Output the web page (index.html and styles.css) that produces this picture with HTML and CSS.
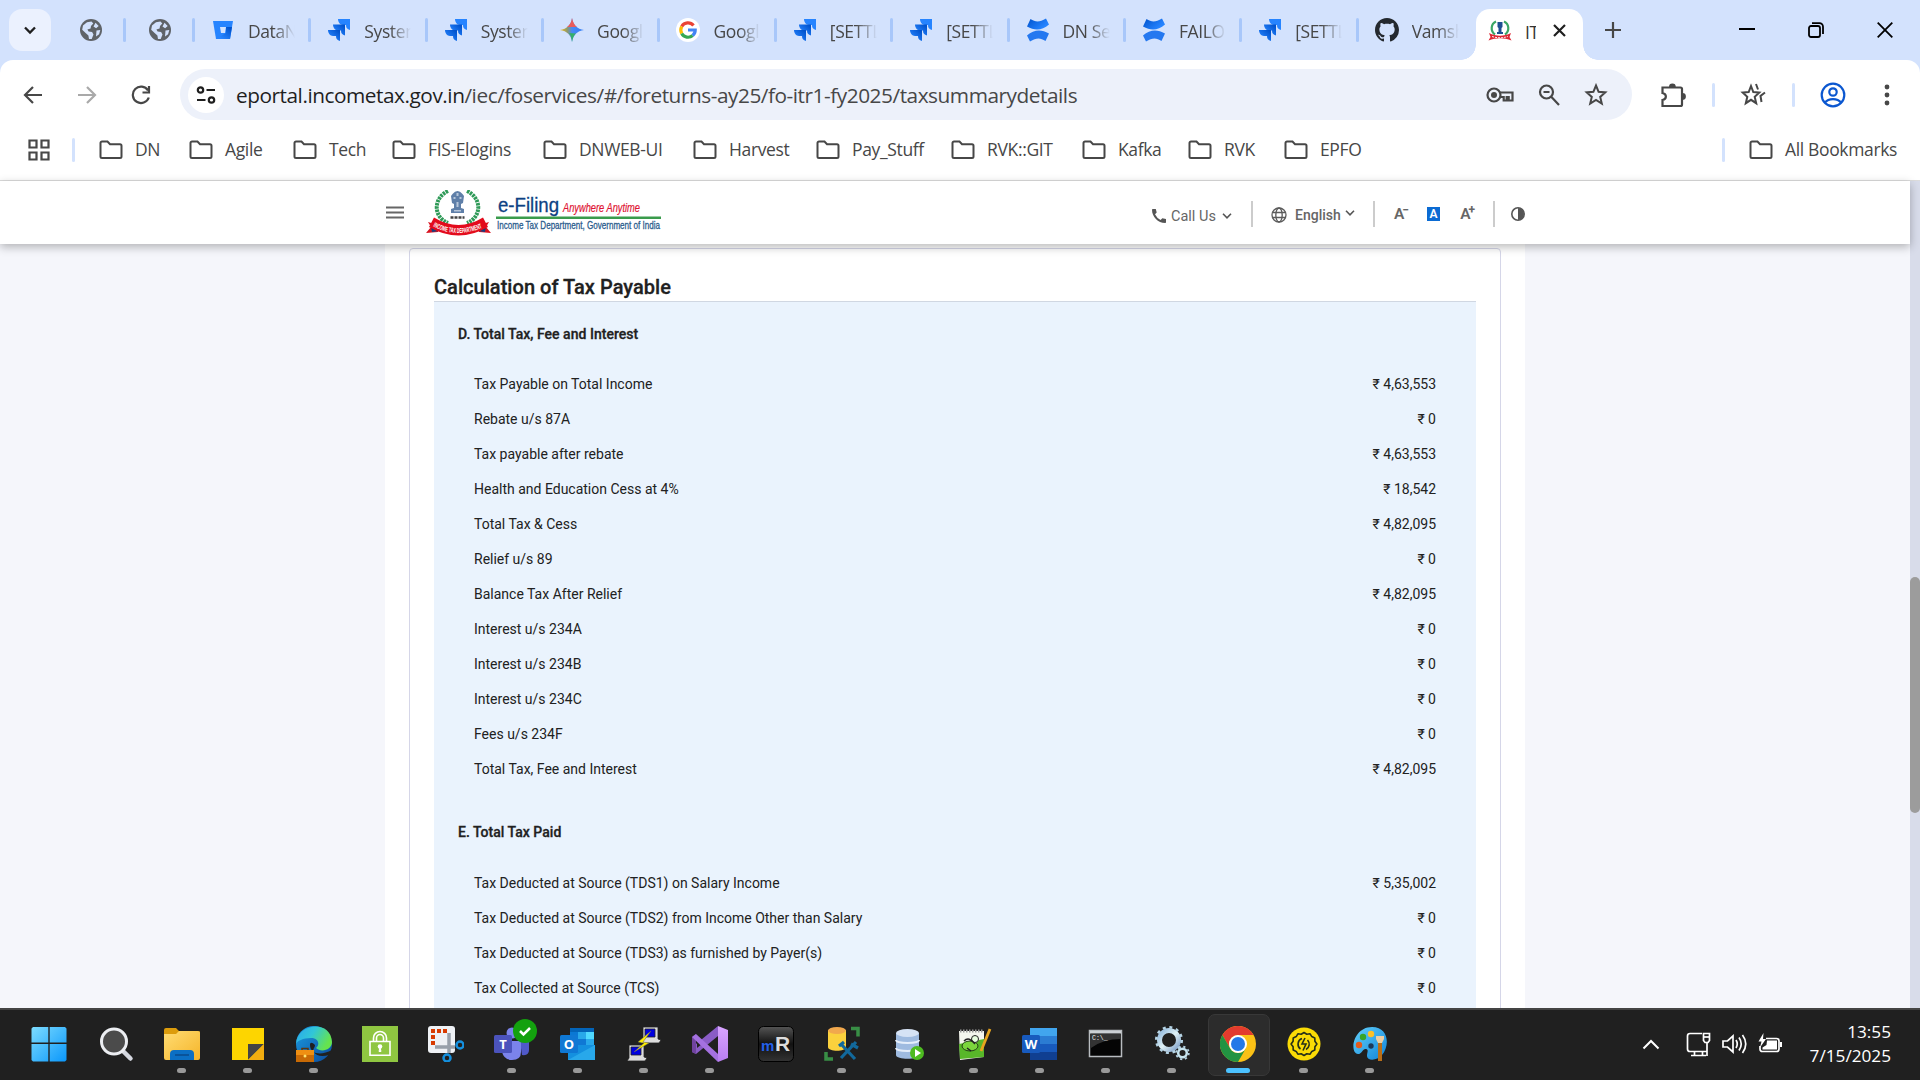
FILE: index.html
```html
<!DOCTYPE html>
<html lang="en">
<head>
<meta charset="utf-8">
<title>ITR - e-Filing</title>
<link rel="stylesheet" href="styles.css">
</head>
<body>
<svg class="defs" width="0" height="0">
  <defs>
    <linearGradient id="jg" x1="1" y1="0" x2="0" y2="1"><stop offset=".1" stop-color="#0052cc"/><stop offset=".8" stop-color="#2684ff"/></linearGradient>
    <linearGradient id="cg" x1="0" y1="0" x2="1" y2=".6"><stop offset="0" stop-color="#0052cc"/><stop offset=".9" stop-color="#2684ff"/></linearGradient>
    <linearGradient id="win" x1="0" y1="0" x2="1" y2="1"><stop offset="0" stop-color="#7ddcff"/><stop offset="1" stop-color="#0a97fb"/></linearGradient>
    <linearGradient id="fold" x1="0" y1="0" x2="1" y2="1"><stop offset="0" stop-color="#ffdc73"/><stop offset="1" stop-color="#f5b52a"/></linearGradient>
    <linearGradient id="edge1" x1="0" y1="0" x2="1" y2=".4"><stop offset="0" stop-color="#2aa7ee"/><stop offset=".5" stop-color="#31c6d8"/><stop offset="1" stop-color="#66e34d"/></linearGradient>
    <linearGradient id="edge2" x1="0" y1="0" x2="1" y2="1"><stop offset="0" stop-color="#1b9de2"/><stop offset="1" stop-color="#0c4a9c"/></linearGradient>
    <linearGradient id="gray" x1="0" y1="0" x2="0" y2="1"><stop offset="0" stop-color="#555"/><stop offset=".5" stop-color="#111"/><stop offset="1" stop-color="#333"/></linearGradient>
    <linearGradient id="vs" x1="0" y1="0" x2="0" y2="1"><stop offset="0" stop-color="#d9a5ff"/><stop offset="1" stop-color="#b77df0"/></linearGradient>
    <linearGradient id="gear" x1="0" y1="0" x2="1" y2="1"><stop offset="0" stop-color="#8fb7dc"/><stop offset=".5" stop-color="#dff1f6"/><stop offset="1" stop-color="#7d9fc8"/></linearGradient>
    <linearGradient id="pal" x1="0" y1="0" x2="1" y2="1"><stop offset="0" stop-color="#62d0fb"/><stop offset="1" stop-color="#0f83d8"/></linearGradient>
    <linearGradient id="gem" x1="0" y1="0" x2="1" y2="0"><stop offset="0" stop-color="#fbbc04"/><stop offset=".3" stop-color="#8f9a6b"/><stop offset=".5" stop-color="#4a8af4"/><stop offset="1" stop-color="#2f7cf6"/></linearGradient>
  </defs>
  <symbol id="i-globe" viewBox="0 0 24 24"><circle cx="12" cy="12" r="11" fill="#5f6368"/><path d="M4 7.500 8 4.200l4.500-.8 1.800 2.200-2.300 2.400-.4 2.400-3.200 1.200 1.200 2 3.500.3 1.400 2.600-1.800 4.500H10l-.6-3.600-2.500-2.200-3.700-3.500zM16.500 4.800l3.200 3.300-2.600 2.100-2.600-1.600zM17.500 12.500l3.800-.5-1.200 4.200-3.100 2.300z" fill="#d3e2fd"/></symbol>
  <symbol id="i-bucket" viewBox="0 0 24 24"><path d="M2 3h20l-3 18H5z" fill="#2684ff"/><path d="M15 9h6l-2 12H5l10-6z" fill="url(#jg)"/><path d="M9 9h6l-1 6h-4z" fill="#d3e2fd"/></symbol>
  <symbol id="i-jira" viewBox="0 0 24 24"><path d="M11 1h12v11c-2.800-.6-4-2.200-4-5h-3c-2.800 0-5-2.800-5-6z" fill="#2684ff"/><path d="M6 6.500h12v11c-2.800-.6-4-2.200-4-5h-3c-2.800 0-5-2.800-5-6z" fill="url(#jg)"/><path d="M1 12h12v11c-2.800-.6-4-2.200-4-5H6c-2.800 0-5-2.800-5-6z" fill="url(#jg)"/></symbol>
  <symbol id="i-conf" viewBox="0 0 24 24"><path d="M1 8.500 4.500 1c5 3.300 9 3.500 15.500-.5L23 6.500C16 12.500 9 13 1 8.500z" fill="url(#cg)"/><path d="M23 15.500 19.500 23c-5-3.300-9-3.500-15.500.5L1 17.500c7-6 14-6.500 22-2z" fill="#2478f0"/></symbol>
  <symbol id="i-gemini" viewBox="0 0 24 24"><path d="M12 0c1 7 5 11 12 12-7 1-11 5-12 12C11 17 7 13 0 12 7 11 11 7 12 0z" fill="url(#gem)"/><path d="M12 0c1 4.500 2.500 7 5 9H7c3-2 4.500-5 5-9z" fill="#ea5b5b"/><path d="M12 24c.7-4 2-7 4-8.500l-7-.5c1.800 2 2.600 5 3 9z" fill="#34b06a"/></symbol>
  <symbol id="i-google" viewBox="0 0 24 24"><circle cx="12" cy="12" r="12" fill="#fff"/><g fill="none" stroke-width="3.200"><path d="M17.500 7.500A7.200 7.200 0 0 0 5.700 8.500" stroke="#ea4335"/><path d="M5.700 8.500a7.500 7.500 0 0 0 0 7" stroke="#fbbc05"/><path d="M5.700 15.500a7.200 7.200 0 0 0 11 2" stroke="#34a853"/><path d="M16.700 17.500a7 7 0 0 0 2.500-5.500H12" stroke="#4285f4"/></g></symbol>
  <symbol id="i-github" viewBox="0 0 16 16"><path fill="#24292f" d="M8 0C3.580 0 0 3.580 0 8c0 3.540 2.290 6.530 5.470 7.590.4.070.55-.17.55-.38 0-.19-.01-.82-.01-1.490-2.010.37-2.530-.49-2.690-.94-.09-.23-.48-.94-.82-1.130-.28-.15-.68-.52-.01-.53.63-.01 1.080.58 1.230.82.72 1.210 1.870.87 2.330.66.07-.52.28-.87.51-1.070-1.780-.2-3.640-.89-3.640-3.950 0-.87.31-1.590.82-2.150-.08-.2-.36-1.020.08-2.120 0 0 .67-.21 2.200.82.64-.18 1.320-.27 2-.27s1.360.09 2 .27c1.530-1.040 2.200-.82 2.200-.82.44 1.100.16 1.920.08 2.120.51.56.82 1.270.82 2.150 0 3.070-1.870 3.750-3.650 3.950.29.25.54.73.54 1.480 0 1.070-.01 1.930-.01 2.200 0 .21.15.46.55.38A8.010 8.010 0 0 0 16 8c0-4.420-3.580-8-8-8z"/></symbol>
  <symbol id="i-emblem" viewBox="0 0 24 22"><path d="M8 1.500a7.500 7.500 0 0 0-1 13M16 1.500a7.500 7.500 0 0 1 1 13" fill="none" stroke="#3aa665" stroke-width="2.200"/><path d="M9.500 2h5v5l-1 1v4h1.500v2h-6v-2h1.500V8l-1-1z" fill="#1d4f91"/><path d="M1 13c7 3.500 15 3.500 22 0l-1.500 4 2 3.500c-7.500-3-15.500-3-23 0L2.500 17z" fill="#dd2633"/><path d="M4 16.500q8 2.500 16 0" fill="none" stroke="#fff" stroke-dasharray="2 1"/></symbol>
  <symbol id="i-folder" viewBox="0 0 24 20"><path d="M1.500 16.500V3a1.500 1.500 0 0 1 1.500-1.500h5.500L11 4.200h10A1.500 1.500 0 0 1 22.500 5.700v10.800A1.500 1.500 0 0 1 21 18H3a1.500 1.500 0 0 1-1.500-1.500z" fill="none" stroke="#474747" stroke-width="2"/></symbol>
</svg>

<div class="screen">
  <div class="tabstrip">
    <div class="tab-search"><svg width="14" height="14" viewBox="0 0 14 14"><path d="M2 4.500 7 9.500l5-5" fill="none" stroke="#1f1f1f" stroke-width="2.300"/></svg></div>
    <div class="tabs">
      <div class="tab tab-pinned"><svg class="fav"><use href="#i-globe"/></svg></div>
      <div class="tab tab-pinned"><svg class="fav"><use href="#i-globe"/></svg></div>
      <div class="tab"><svg class="fav"><use href="#i-bucket"/></svg><span>DataN</span></div>
      <div class="tab"><svg class="fav"><use href="#i-jira"/></svg><span>System</span></div>
      <div class="tab"><svg class="fav"><use href="#i-jira"/></svg><span>System</span></div>
      <div class="tab"><svg class="fav"><use href="#i-gemini"/></svg><span>Googl</span></div>
      <div class="tab"><svg class="fav"><use href="#i-google"/></svg><span>Googl</span></div>
      <div class="tab"><svg class="fav"><use href="#i-jira"/></svg><span>[SETTL</span></div>
      <div class="tab"><svg class="fav"><use href="#i-jira"/></svg><span>[SETTL</span></div>
      <div class="tab"><svg class="fav"><use href="#i-conf"/></svg><span>DN Se</span></div>
      <div class="tab"><svg class="fav"><use href="#i-conf"/></svg><span>FAILO</span></div>
      <div class="tab"><svg class="fav"><use href="#i-jira"/></svg><span>[SETTL</span></div>
      <div class="tab tab-last"><svg class="fav"><use href="#i-github"/></svg><span>Vamsh</span></div>
    </div>
    <div class="tab-active"><svg class="fav"><use href="#i-emblem"/></svg><span>IT</span><svg class="close" viewBox="0 0 13 13"><path d="m1 1 11 11M12 1 1 12" stroke="#1f1f1f" stroke-width="2.200"/></svg></div>
    <svg class="plus" viewBox="0 0 16 16"><path d="M8 0v16M0 8h16" stroke="#474747" stroke-width="2.200"/></svg>
    <div class="winbtns">
      <svg width="16" height="16" viewBox="0 0 16 16"><path d="M0 7h16" stroke="#000" stroke-width="2"/></svg>
      <svg width="16" height="16" viewBox="0 0 16 16" fill="none" stroke="#000" stroke-width="1.800"><rect x="1" y="4" width="11" height="11" rx="2"/><path d="M4 1.200h7.500a3.500 3.500 0 0 1 3.500 3.500V12"/></svg>
      <svg width="16" height="16" viewBox="0 0 16 16"><path d="m.7.7 14.600 14.600M15.300.7.7 15.300" stroke="#000" stroke-width="1.800"/></svg>
    </div>
  </div>

  <div class="toolbar">
    <div class="navbtns">
      <svg width="20" height="20" viewBox="0 0 20 20" fill="none" stroke="#474747" stroke-width="2.200"><path d="M19 10H3M10 2l-8 8 8 8"/></svg>
      <svg width="20" height="20" viewBox="0 0 20 20" fill="none" stroke="#a9a9a9" stroke-width="2.200"><path d="M1 10h16M10 2l8 8-8 8"/></svg>
      <svg width="20" height="20" viewBox="0 0 20 20" fill="none" stroke="#474747" stroke-width="2.200"><path d="M17.800 12.500A8.200 8.200 0 1 1 17 5.500M18 1v6.500h-6.500"/></svg>
    </div>
    <div class="omnibox">
      <div class="siteinfo"><svg width="20" height="20" viewBox="0 0 20 20" fill="none" stroke="#1f1f1f" stroke-width="2.200"><circle cx="4.500" cy="5" r="2.700"/><path d="M10.500 5H19M1 15h8.500"/><circle cx="15.500" cy="15" r="2.700"/></svg></div>
      <div class="url"><b>eportal.incometax.gov.in</b>/iec/foservices/#/foreturns-ay25/fo-itr1-fy2025/taxsummarydetails</div>
      <div class="omni-icons">
        <svg width="28" height="20" viewBox="0 0 28 20" fill="none" stroke="#474747" stroke-width="2.200"><circle cx="8" cy="10" r="6.500"/><circle cx="8" cy="10" r="3" fill="#474747" stroke="none"/><path d="M14 7.500h12.500v8h-3.800v-3.500h-2v3.500h-3v-3.500H14"/></svg>
        <svg width="22" height="22" viewBox="0 0 22 22" fill="none" stroke="#474747" stroke-width="2.200"><circle cx="8.500" cy="8" r="6.500"/><path d="m13 12.500 8 8.500M5.500 8h6"/></svg>
        <svg width="24" height="24" viewBox="0 0 24 24" fill="none" stroke="#474747" stroke-width="2"><path d="m12 2.500 2.600 6.300 6.700.6-5.100 4.500 1.600 6.700L12 17l-5.800 3.600 1.600-6.700-5.100-4.500 6.700-.6z"/></svg>
      </div>
    </div>
    <div class="actions">
      <svg width="26" height="26" viewBox="0 0 26 26"><path d="M2.500 5.500h18a1.500 1.500 0 0 1 1.500 1.500v15.500a1.500 1.500 0 0 1-1.500 1.500h-18v-6c4.500-1 4.500-6 0-7z" fill="none" stroke="#474747" stroke-width="2.200"/><path d="M9 5a3.400 3.400 0 0 1 6.800 0zM22.500 11a3.400 3.400 0 0 1 0 6.800z" fill="#474747"/></svg>
      <i class="sep"></i>
      <svg width="26" height="24" viewBox="0 0 26 24" fill="none" stroke="#474747" stroke-width="2"><path d="m11 3 2.300 6 6 .5-4.600 4.300 1.500 6.400L11 16.800l-5.200 3.400 1.500-6.400L2.700 9.500l6-.5z"/><path d="m16 1 2 5.500M25 9.500l-4.500 3.500 1 6"/></svg>
      <i class="sep"></i>
      <svg width="26" height="26" viewBox="0 0 26 26" fill="none" stroke="#0b57d0" stroke-width="2.200"><circle cx="13" cy="13" r="11.300"/><circle cx="13" cy="10" r="3.700"/><path d="M5 20.500c3.500-4.500 12.500-4.500 16 0"/></svg>
      <svg class="more" width="6" height="22" viewBox="0 0 6 22" fill="#474747"><circle cx="3" cy="3" r="2.400"/><circle cx="3" cy="11" r="2.400"/><circle cx="3" cy="19" r="2.400"/></svg>
    </div>
  </div>

  <div class="bookmarks">
    <svg class="apps" width="22" height="22" viewBox="0 0 22 22" fill="none" stroke="#474747" stroke-width="2.200"><path d="M1.500 1.500h7v7h-7zM13.500 1.500h7v7h-7zM1.500 13.500h7v7h-7zM13.500 13.500h7v7h-7z"/></svg>
    <i class="sep"></i>
    <div class="bm-list">
      <div class="bm"><svg><use href="#i-folder"/></svg><span>DN</span></div>
      <div class="bm"><svg><use href="#i-folder"/></svg><span>Agile</span></div>
      <div class="bm"><svg><use href="#i-folder"/></svg><span>Tech</span></div>
      <div class="bm"><svg><use href="#i-folder"/></svg><span>FIS-Elogins</span></div>
      <div class="bm"><svg><use href="#i-folder"/></svg><span>DNWEB-UI</span></div>
      <div class="bm"><svg><use href="#i-folder"/></svg><span>Harvest</span></div>
      <div class="bm"><svg><use href="#i-folder"/></svg><span>Pay_Stuff</span></div>
      <div class="bm"><svg><use href="#i-folder"/></svg><span>RVK::GIT</span></div>
      <div class="bm"><svg><use href="#i-folder"/></svg><span>Kafka</span></div>
      <div class="bm"><svg><use href="#i-folder"/></svg><span>RVK</span></div>
      <div class="bm"><svg><use href="#i-folder"/></svg><span>EPFO</span></div>
    </div>
    <i class="sep"></i>
    <div class="bm bm-all"><svg><use href="#i-folder"/></svg><span>All Bookmarks</span></div>
  </div>

  <div class="viewport">
    <div class="site">
      <header class="site-head">
        <svg class="burger" width="18" height="13" viewBox="0 0 18 13"><path d="M0 1.500h18M0 6.500h18M0 11.500h18" stroke="#666" stroke-width="2"/></svg>
        <svg class="logo" width="236" height="47" viewBox="0 0 236 47">
          <path d="M22 1C7 8 7 27 22 33M41 1c15 7 15 26 0 32" fill="none" stroke="#2f9a58" stroke-width="4" stroke-dasharray="2.500 .8"/>
          <path d="M26.500 4q5-6 10 0l1.500 2-1 7-2 1v4l3 1v4H25v-4l3-1v-4l-2-1-1-7z" fill="#5f7fa8"/><path d="M27.500 7h2v2h-2zM33.500 7h2v2h-2zM30.500 3h2v3h-2zM30.500 12h2v5h-2zM28 20h7v1.500h-7z" fill="#b6c6d9"/>
          <path d="M24.500 27.500h14" stroke="#444" stroke-width="2.500" stroke-dasharray="3 1"/>
          <path d="m0 43 5-6-3-5 10 3v7zM65 43l-5-6 3-5-10 3v7z" fill="#d8101e"/><path d="m5 36 8 1v4l-7 1zM60 36l-8 1v4l7 1z" fill="#153f80"/>
          <path d="M8 27.500q24.500 15 49 0l5 9.500q-29.500 17-59 0z" fill="#e30b1c"/>
          <path id="ribbon" d="M7 36.500q25.500 13 52 0" fill="none"/>
          <text font-family="Liberation Sans" font-weight="700" font-size="7" fill="#fff"><textPath href="#ribbon" textLength="51" lengthAdjust="spacingAndGlyphs">INCOME TAX DEPARTMENT</textPath></text>
          <text x="72" y="22" font-family="Liberation Sans" font-size="20" fill="#0d4183" stroke="#0d4183" stroke-width=".3" textLength="61" lengthAdjust="spacingAndGlyphs">e-Filing</text>
          <text x="137" y="22" font-family="Liberation Sans" font-style="italic" font-size="13" fill="#e01232" stroke="#e01232" stroke-width=".2" textLength="77" lengthAdjust="spacingAndGlyphs">Anywhere Anytime</text>
          <path d="M70 27.700h165" stroke="#3a9b4c" stroke-width="2.400"/>
          <text x="71" y="39" font-family="Liberation Sans" font-size="11.500" fill="#2a5b8c" stroke="#2a5b8c" stroke-width=".3" textLength="163" lengthAdjust="spacingAndGlyphs">Income Tax Department, Government of India</text>
        </svg>
        <div class="tools">
          <div class="call"><svg width="14" height="14" viewBox="0 0 14 14"><path d="M0 .8Q0 0 .8 0h3l.9 3.600-1.700 1.600q1.700 3.700 5.600 5.700l1.700-1.700 3.700.8v3.200q0 .8-.8.800C6 14 0 8 0 .8z" fill="#555"/></svg><span>Call Us</span><svg class="chev" viewBox="0 0 10 6"><path d="m1 .8 4 4 4-4" fill="none" stroke="#555" stroke-width="1.600"/></svg></div>
          <i class="bar"></i>
          <div class="lang"><svg width="16" height="16" viewBox="0 0 16 16" fill="none" stroke="#5c5c5c" stroke-width="1.300"><circle cx="8" cy="8" r="7"/><ellipse cx="8" cy="8" rx="3.200" ry="7"/><path d="M1.500 5.500h13M1.500 10.500h13"/></svg><span>English</span><svg class="chev" viewBox="0 0 10 6"><path d="m1 .8 4 4 4-4" fill="none" stroke="#555" stroke-width="1.600"/></svg></div>
          <i class="bar"></i>
          <div class="sizes"><span>A<sup>−</sup></span><span class="sel">A</span><span>A<sup>+</sup></span></div>
          <i class="bar"></i>
          <svg class="contrast" width="14" height="14" viewBox="0 0 14 14"><circle cx="7" cy="7" r="6.200" fill="none" stroke="#555" stroke-width="1.600"/><path d="M7 1a6 6 0 0 1 0 12z" fill="#555"/></svg>
        </div>
      </header>
      <main class="content">
        <section class="card">
          <h1>Calculation of Tax Payable</h1>
          <div class="panel">
            <h2>D. Total Tax, Fee and Interest</h2>
            <dl>
              <div><dt>Tax Payable on Total Income</dt><dd>₹ 4,63,553</dd></div>
              <div><dt>Rebate u/s 87A</dt><dd>₹ 0</dd></div>
              <div><dt>Tax payable after rebate</dt><dd>₹ 4,63,553</dd></div>
              <div><dt>Health and Education Cess at 4%</dt><dd>₹ 18,542</dd></div>
              <div><dt>Total Tax &amp; Cess</dt><dd>₹ 4,82,095</dd></div>
              <div><dt>Relief u/s 89</dt><dd>₹ 0</dd></div>
              <div><dt>Balance Tax After Relief</dt><dd>₹ 4,82,095</dd></div>
              <div><dt>Interest u/s 234A</dt><dd>₹ 0</dd></div>
              <div><dt>Interest u/s 234B</dt><dd>₹ 0</dd></div>
              <div><dt>Interest u/s 234C</dt><dd>₹ 0</dd></div>
              <div><dt>Fees u/s 234F</dt><dd>₹ 0</dd></div>
              <div><dt>Total Tax, Fee and Interest</dt><dd>₹ 4,82,095</dd></div>
            </dl>
            <h2>E. Total Tax Paid</h2>
            <dl class="paid">
              <div><dt>Tax Deducted at Source (TDS1) on Salary Income</dt><dd>₹ 5,35,002</dd></div>
              <div><dt>Tax Deducted at Source (TDS2) from Income Other than Salary</dt><dd>₹ 0</dd></div>
              <div><dt>Tax Deducted at Source (TDS3) as furnished by Payer(s)</dt><dd>₹ 0</dd></div>
              <div><dt>Tax Collected at Source (TCS)</dt><dd>₹ 0</dd></div>
            </dl>
          </div>
        </section>
      </main>
    </div>
    <div class="scrolltrack"><div class="thumb"></div></div>
  </div>

  <div class="taskbar">
    <div class="apps-row">
      <div class="app start"><svg viewBox="0 0 36 36"><path d="M2 1h15.300v15.500H.5V2.500zM18.700 1H34l1.500 1.500v14H18.700zM.5 18h16.800v17.500H2L.5 34zM18.700 18h16.800v16L34 35.500H18.700z" fill="url(#win)"/></svg></div>
      <div class="app"><svg viewBox="0 0 36 36"><path d="m25 25 7.500 7.500" stroke="#d5d8e0" stroke-width="4.500" stroke-linecap="round"/><circle cx="16" cy="15.500" r="12.500" fill="#4b4b4b" stroke="#eceef2" stroke-width="3"/></svg></div>
      <div class="app run"><svg viewBox="0 0 36 36"><path d="M0 4q0-2 2-2h10l3.500 3.500H36V20H0z" fill="#dc9c0c"/><path d="M0 8h12l3-3h19q2 0 2 2v25q0 2-2 2H2q-2 0-2-2z" fill="url(#fold)"/><path d="M6 34v-6q0-4 4-4h16q4 0 4 4v6z" fill="#0b6fc4"/><path d="M11 29h14" stroke="#0a4a8c" stroke-width="1.500"/></svg></div>
      <div class="app run"><svg viewBox="0 0 36 36"><path d="M2 2h32v32H2z" fill="#fdd500"/><path d="M18 34V18h16z" fill="#444"/><path d="M34 18v16H18z" fill="#f2ad10"/></svg></div>
      <div class="app run"><svg viewBox="0 0 36 36"><circle cx="18" cy="18" r="18" fill="url(#edge2)"/><path d="M0 18C1-3 35-7 36 16c0 8-11 11-16 6 4-3 3-10-5-10C7 12 1 15 0 18z" fill="url(#edge1)"/><path d="M14 19c0 9 11 11 22 5-1 2-2 4-3 5-7 2-13 1-15-3-2-3 1-4 1-7-3-3-5-3-5 0z" fill="#202020"/><path d="M0 24h18v12H0z" fill="#c86a05"/><path d="M0 24h18v5H0z" fill="#ef8f12"/><circle cx="9" cy="30" r="1.500" fill="#ffe36b"/><path d="M6 24v-1.500h6V24" fill="none" stroke="#5a3510" stroke-width="1.500"/></svg></div>
      <div class="app"><svg viewBox="0 0 36 36"><path d="M0 0h36v36H0z" fill="#8fc641"/><g fill="none" stroke="#fff" stroke-width="1.600"><path d="M8 15.500h20v13.700H8zM11.500 15v-3a6.500 6.500 0 0 1 13 0v3M14.500 15v-3a3.500 3.500 0 0 1 7 0v3"/></g><circle cx="18" cy="20.500" r="2.300" fill="#fff"/><path d="m18 21 1 4.500h-2z" fill="#fff" stroke="#fff"/></svg></div>
      <div class="app"><svg viewBox="0 0 36 36"><rect width="27" height="27" rx="3" fill="#eef1f5"/><path d="M3 5h16M5 9v10" fill="none" stroke="#d83b01" stroke-width="4" stroke-dasharray="4 2"/><path d="M21 7v20M7 21h20" stroke="#98a0aa" stroke-width="3.500"/><g fill="none" stroke="#1490df" stroke-width="2.500"><circle cx="32" cy="19" r="3.500"/><circle cx="19" cy="32" r="3.500"/></g></svg></div>
      <div class="app run"><svg viewBox="0 0 36 36"><circle cx="18" cy="7" r="5.500" fill="#7b83eb"/><path d="M26 15h9v9q0 6-7 5z" fill="#5059c9"/><path d="M8 15h19v11q0 8-9 8-8 0-10-8z" fill="#7b83eb"/><rect y="9" width="18" height="18" rx="1.500" fill="#4b53bc"/><text x="9" y="22.500" text-anchor="middle" font-family="Open Sans" font-size="13" font-weight="700" fill="#fff">T</text></svg><svg class="badge" viewBox="0 0 24 24"><circle cx="12" cy="12" r="12" fill="#13a10e"/><path d="m7 12 3.500 3.500L17 9" fill="none" stroke="#fff" stroke-width="2.500"/></svg></div>
      <div class="app run"><svg viewBox="0 0 36 36"><path d="M10 2h24v12H10z" fill="#0364b8"/><path d="M10 6h12v14H10z" fill="#0a78d4"/><path d="M18 6h8v7h-8z" fill="#28a8ea"/><path d="M26 6h8v7h-8z" fill="#50d9ff"/><path d="M18 13h8v7h-8z" fill="#0f78d4"/><path d="M26 13h8v7h-8z" fill="#28a8ea"/><path d="M8 19h27v15H8z" fill="#1490df"/><path d="m8 34 27-15v15z" fill="#28a8ea"/><rect y="9" width="18" height="18" rx="1.500" fill="#0f78d4"/><text x="9" y="22.500" text-anchor="middle" font-family="Open Sans" font-size="13" font-weight="700" fill="#fff">O</text></svg></div>
      <div class="app run"><svg viewBox="0 0 36 36"><g stroke="#222" stroke-width=".8"><path d="M17 1h15v12l3 1-2 3H14l3-3zM3 19h15v12l3 1-2 3H1l2-3z" fill="#ddd"/><path d="M19 3h10v8H19zM5 21h10v8H5z" fill="#0000e0"/></g><path d="M25 5 12 16l6 1-10 9 15-9-6-1z" fill="#ffef00" stroke="#665" stroke-width=".5"/></svg></div>
      <div class="app run"><svg viewBox="0 0 36 36"><path d="m0 26 4 2L26 10V0L4 18z" fill="#8a5cc6"/><path d="M0 11v15l4 2V8z" fill="#70439f"/><path d="m5 14 5 4-5 4z" fill="#202020"/><path d="m26 0 10 4v28l-10 4z" fill="url(#vs)"/><path d="m4 8 22 20v8L0 11z" fill="#a471e0"/></svg></div>
      <div class="app"><svg viewBox="0 0 36 36"><rect x=".5" y=".5" width="35" height="35" rx="5" fill="url(#gray)" stroke="#000"/><text x="3" y="25" font-family="Liberation Sans" font-size="15" font-weight="700" fill="#2360e8">m</text><text x="17" y="25" font-family="Liberation Sans" font-size="21" font-weight="700" fill="#ddd">R</text></svg></div>
      <div class="app run"><svg viewBox="0 0 36 36"><path d="M4 4v17c0 5 18 5 18 0V4z" fill="#fbd13d"/><ellipse cx="13" cy="4.500" rx="9" ry="3.500" fill="#f1a84d"/><path d="M27 2.500h7v8M9 33H2v-7" fill="none" stroke="#388e45" stroke-width="3.500"/><path d="m15 20 5-4M17 18l14 15M32 16 17 32M27 18l7 4" stroke="#12699c" stroke-width="3.200"/></svg></div>
      <div class="app run"><svg viewBox="0 0 36 36"><path d="M6 7v22c0 5 23 5 23 0V7z" fill="#9fbbe0"/><path d="M6 14c0 4 23 4 23 0M6 22c0 4 23 4 23 0" fill="none" stroke="#e5eefa" stroke-width="2"/><ellipse cx="17.500" cy="7" rx="11.500" ry="4" fill="#d6e3f5"/><circle cx="27" cy="27" r="7" fill="#4dbb20"/><path d="m25 23 6 4-6 4z" fill="#fff"/></svg></div>
      <div class="app run"><svg viewBox="0 0 36 36"><path d="M3 5h25v26l-24 3z" fill="#f4f6ee"/><path d="m3 18 25-5v18L4 33z" fill="#58b729"/><path d="M4 5h24" stroke="#999" stroke-width="3" stroke-dasharray="1.500 1.500"/><ellipse cx="14" cy="20" rx="8" ry="5" fill="#7bd53d" stroke="#243f17"/><circle cx="19" cy="13" r="3.500" fill="#e8ffe0" stroke="#222"/><path d="M8 15q5-5 11 3M11 22l4 3" fill="none" stroke="#222" stroke-width="1.500"/><path d="m34 3-9 22" stroke="#e8a51f" stroke-width="2.800"/></svg></div>
      <div class="app run"><svg viewBox="0 0 36 36"><path d="M8 2h27v9H8z" fill="#41a5ee"/><path d="M8 10h27v8H8z" fill="#2b7cd3"/><path d="M8 18h27v8H8z" fill="#185abd"/><path d="M8 26h27v8H8z" fill="#103f91"/><rect y="9" width="18" height="18" rx="1.500" fill="#185abd"/><text x="9" y="22.500" text-anchor="middle" font-family="Open Sans" font-size="13" font-weight="700" fill="#fff">W</text></svg></div>
      <div class="app run"><svg viewBox="0 0 36 36"><path d="M1.500 4.500h32v26h-32z" fill="#050505" stroke="#b8bcc0" stroke-width="1.500"/><path d="M2 5h31v2.500H2z" fill="#ccd0d4"/><path d="M2 8h31v5Q15 13 3 22z" fill="#333"/><text x="4" y="14" font-family="Liberation Mono" font-size="6.500" fill="#eee">C:\_</text></svg></div>
      <div class="app run"><svg viewBox="0 0 36 36" fill="none"><circle cx="15" cy="14" r="9.500" stroke="url(#gear)" stroke-width="5"/><circle cx="15" cy="14" r="12.800" stroke="#b5d3e4" stroke-width="2.500" stroke-dasharray="3 3.700"/><circle cx="28.500" cy="27" r="4.300" stroke="#c6e3ee" stroke-width="2.500"/><circle cx="28.500" cy="27" r="6.300" stroke="#b5d3e4" stroke-width="1.800" stroke-dasharray="2.200 2.750"/></svg></div>
      <div class="app run current"><svg viewBox="0 0 36 36"><circle cx="18" cy="18" r="18" fill="#fbc116"/><path d="M2.400 9a18 18 0 0 1 31.200 0H18a9 9 0 0 0-7.800 13.500z" fill="#e33b2e"/><path d="M2.400 9A18 18 0 0 0 18 36l7.800-13.500a9 9 0 0 1-15.600 0z" fill="#229342"/><circle cx="18" cy="18" r="9" fill="#fff"/><circle cx="18" cy="18" r="7" fill="#2478e8"/></svg></div>
      <div class="app run"><svg viewBox="0 0 36 36"><circle cx="18" cy="18" r="16.500" fill="#fadb05"/><g fill="none" stroke="#26301a" stroke-width="1.600"><path d="m18 6.500 2.800 1.700 3.300-.4 1.700 2.800 3 1.300.1 3.300 2 2.800-2 2.800-.1 3.300-3 1.300-1.700 2.800-3.300-.4L18 29.500l-2.800-1.700-3.300.4-1.700-2.800-3-1.300-.1-3.300-2-2.800 2-2.800.1-3.300 3-1.300 1.700-2.800 3.300.4z" stroke-linejoin="round"/><path d="M16 12.500a6 6 0 0 0-1.500 10.500M19 12l-3 6h4l-3 6.500M21.500 14a6 6 0 0 1-1.500 9.500"/></g></svg></div>
      <div class="app run"><svg viewBox="0 0 36 36"><path d="M20 1C37 1 38 20 30 29c-5 6-15 6-15 1 0-4 2-6-1-7s-4 5-8 5C-3 27 1 1 20 1z" fill="url(#pal)"/><circle cx="7" cy="19" r="3.200" fill="#e25a1c"/><circle cx="11" cy="11" r="3.200" fill="#36a528"/><circle cx="19" cy="8" r="3.200" fill="#fdc126"/><circle cx="19" cy="20" r="2.700" fill="#1c3a5b"/><path d="M26 16h4v19h-4z" fill="#b96e18"/><path d="M24 10h8v3l-2 4h-4l-2-4z" fill="#eccfa5"/></svg></div>
    </div>
    <div class="tray">
      <svg width="18" height="11" viewBox="0 0 18 11"><path d="m1.500 9.500 7.500-7.500 7.500 7.500" fill="none" stroke="#fff" stroke-width="2"/></svg>
      <div class="tray-group">
        <svg width="25" height="25" viewBox="0 0 25 25" fill="none" stroke="#fff" stroke-width="1.700"><path d="M16 1.500H4Q1.500 1.500 1.500 4v13q0 2.500 2.500 2.500h17M8.500 19.500v4M16.500 19.500v4M5 23.500h15M21 10.500V24"/><path d="M17.500 1.500h6v7l-1.500 2h-3l-1.500-2z"/><path d="M17.500 5h6"/></svg>
        <svg width="25" height="22" viewBox="0 0 25 22" fill="none" stroke="#fff" stroke-width="1.700"><path d="M1 8v6h4.500l5.500 5V3L5.500 8zM14 7q2.500 4 0 8M17 4.500q4.500 6.500 0 13M20.500 2q6.500 9 0 18"/></svg>
        <svg width="25" height="22" viewBox="0 0 25 22"><path d="M8 5.500h10.500Q21 5.500 21 8v8q0 2.500-2.500 2.500h-14Q2 18.500 2 16v-3" fill="none" stroke="#fff" stroke-width="1.700"/><path d="M9 7.500h10v9H4.500v-2L8.500 12z" fill="#fff"/><path d="M22 9h2v5h-2zM5.500 0 .5 8.500h3L2 14.500 8 6H5z" fill="#fff"/></svg>
      </div>
      <div class="clock"><div>13:55</div><div>7/15/2025</div></div>
    </div>
  </div>
</div>
</body>
</html>
```

FILE: styles.css
```css
* { box-sizing: border-box; }
body { margin: 0; background: #d3e2fd; font-family: "Open Sans", "Noto Sans", sans-serif; overflow: hidden; }
svg { display: block; flex: none; }
.defs { position: absolute; }
.screen { width: 1920px; height: 1080px; display: flex; flex-direction: column; overflow: hidden; }

/* tab strip */
.tabstrip { height: 60px; flex: none; display: flex; align-items: flex-start; background: #d3e2fd; padding-left: 9px; }
.tab-search { width: 42px; height: 42px; margin-top: 9px; border-radius: 13px; background: #ebf1fe; display: flex; align-items: center; justify-content: center; }
.tabs { height: 60px; margin-left: 23px; width: 1401px; display: grid; grid-template-columns: 52px 69px repeat(11, 1fr); }
.tab { display: flex; align-items: center; position: relative; padding-left: 16px; gap: 13px; min-width: 0; }
.tab-pinned { padding-left: 5px; }
.tab-pinned + .tab-pinned { padding-left: 22px; }
.tab::after { content: ""; position: absolute; right: 0; top: 18px; width: 3px; height: 24px; border-radius: 2px; background: #a8c7fa; }
.tab-last::after { display: none; }
.fav { width: 24px; height: 24px; }
.tab span { width: 47px; height: 26px; line-height: 26px; margin-top: 2px; overflow: hidden; white-space: nowrap; font-size: 17.500px; letter-spacing: -.4px; color: #474747; -webkit-mask-image: linear-gradient(90deg, #000 55%, transparent); mask-image: linear-gradient(90deg, #000 55%, transparent); }
.tab-active { width: 107px; height: 51px; margin-top: 9px; margin-left: 1px; border-radius: 14px 14px 0 0; background: #fff; display: flex; align-items: center; padding: 0 0 8px 12px; position: relative; }
.tab-active::before, .tab-active::after { content: ""; position: absolute; bottom: 0; width: 15px; height: 15px; }
.tab-active::before { left: -15px; background: radial-gradient(circle at 0 0, transparent 14.500px, #fff 15px); }
.tab-active::after { right: -15px; background: radial-gradient(circle at 100% 0, transparent 14.500px, #fff 15px); }
.tab-active span { width: 11px; margin: 2px 17px 0 13px; overflow: hidden; font-size: 17.500px; letter-spacing: -.4px; color: #333; }
.close { width: 13px; height: 13px; }
.plus { width: 16px; height: 16px; margin: 22px 0 0 22px; }
.winbtns { display: flex; gap: 53px; margin: 22px 0 0 118px; }

/* toolbar */
.toolbar { height: 68px; flex: none; background: #fff; border-radius: 13px 13px 0 0; display: flex; align-items: center; padding-left: 23px; padding-top: 1px; }
.navbtns { display: flex; gap: 34px; width: 157px; }
.omnibox { width: 1452px; height: 51px; border-radius: 26px; background: #edf1fa; display: flex; align-items: center; padding-left: 8px; }
.siteinfo { width: 36px; height: 36px; border-radius: 50%; background: #fff; display: flex; align-items: center; justify-content: center; }
.url { width: 1249px; padding-left: 12px; font-size: 20.800px; letter-spacing: -.46px; color: #474747; white-space: nowrap; }
.url b { font-weight: 400; color: #1f1f1f; }
.omni-icons { display: flex; align-items: center; gap: 24px; margin-left: 13px; }
.actions { display: flex; align-items: center; margin-left: 28px; gap: 25.500px; }
.more { margin-left: 12px; }
.sep { width: 3px; height: 24px; border-radius: 2px; background: #d3e2fd; flex: none; }

/* bookmarks */
.bookmarks { height: 52px; flex: none; background: #fff; display: flex; align-items: center; padding: 0 0 8px 28px; }
.bookmarks .apps { margin-right: 22px; }
.bm-list { margin-left: 24px; width: 1623px; display: grid; grid-template-columns: 90px 104px 99px 151px 150px 123px 135px 131px 106px 96px 1fr; }
.bm { display: flex; align-items: center; gap: 12px; font-size: 17.500px; line-height: 22px; letter-spacing: -.35px; color: #474747; white-space: nowrap; }
.bm span { padding-bottom: 2px; }
.bm svg { width: 24px; height: 20px; }
.bm-all { margin-left: 24px; }

/* page viewport */
.viewport { flex: 1; min-height: 0; display: flex; border-top: 1px solid #dcdcdc; font-family: Roboto, sans-serif; }
.site { width: 1910px; background: #f5f6fb; display: flex; flex-direction: column; min-height: 0; }
.site-head { height: 63px; flex: none; background: #fff; box-shadow: 0 3px 9px rgba(0, 0, 0, .28); position: relative; z-index: 1; display: flex; align-items: flex-start; padding-left: 386px; }
.burger { margin-top: 25px; }
.logo { margin: 9px 0 0 22px; }
.tools { display: flex; align-items: center; margin: 19px 0 0 490px; height: 28px; }
.tools span { color: #666; }
.call { display: flex; align-items: center; margin-top: 4px; }
.call span { width: 44px; margin: 0 7px 0 5px; font-size: 14.500px; white-space: nowrap; }
.chev { width: 10px; height: 6px; }
.lang { display: flex; align-items: center; padding-top: 1px; }
.lang .chev { margin-top: -3px; }
.lang span { width: 46px; margin: 0 4px 0 8px; font-size: 14px; font-weight: 500; }
.bar { width: 2px; height: 26px; background: #ccc; margin: 0 18px; }
.call + .bar { margin-left: 19px; }
.lang + .bar { margin-left: 18px; margin-right: 19px; }
.sizes { display: flex; width: 99px; font-size: 15.500px; font-weight: 600; line-height: 14px; }
.sizes span { width: 34px; height: 14px; white-space: nowrap; }
.sizes sup { font-size: 12px; line-height: 0; vertical-align: 5px; margin-left: -2px; font-weight: 700; }
.sizes .sel { width: 14px; margin-right: 20px; background: #0b6bd3; color: #fff; font-size: 12px; text-align: center; }
.sizes + .bar { margin-left: 0; margin-right: 16px; }
.content { width: 1140px; margin-left: 385px; background: #fff; flex: 1; min-height: 0; padding: 4px 24px 0; overflow: hidden; }
.card { height: 900px; border: 1px solid #d5d6e8; border-radius: 4px; padding: 0 24px; color: #212121; }
.card h1 { margin: 0; height: 52px; padding-top: 24px; font-size: 20px; line-height: 28px; font-weight: 500; letter-spacing: .04px; -webkit-text-stroke: .3px #212121; }
.panel { border-top: 1px solid #d0d7e2; background: #eaf3fd; height: 840px; padding: 22px 40px 0 24px; }
.panel h2 { margin: 0; font-size: 14px; line-height: 20px; font-weight: 500; letter-spacing: .02px; -webkit-text-stroke: .3px #212121; }
dl { margin: 23px 0 35px 16px; font-size: 14px; }
dl.paid { margin-top: 24px; }
dl div { display: flex; justify-content: space-between; height: 35px; line-height: 35px; }
dd { margin: 0; }
.scrolltrack { width: 10px; background: #d8dcea; padding-top: 396px; }
.thumb { height: 236px; border-radius: 5px; background: #9c9c9c; }

/* taskbar */
.taskbar { height: 72px; flex: none; background: #202020; border-top: 2px solid #444; display: flex; justify-content: space-between; padding: 0 29px 0 16px; }
.apps-row { display: flex; }
.app { width: 66px; height: 70px; padding: 16px 15px 0; position: relative; }
.app.start { margin-right: 1px; }
.app > svg { width: 36px; height: 36px; position: relative; }
.app.run::after { content: ""; position: absolute; left: 28px; top: 58px; width: 9px; height: 5px; border-radius: 3px; background: #999; }
.app.current::before { content: ""; position: absolute; left: 3px; top: 4px; width: 60px; height: 60px; border: 1px solid #383838; border-radius: 7px; background: #2c2c2c; }
.app.current::after { left: 21px; width: 24px; background: #4cc2ff; }
.app > .badge { position: absolute; left: 34px; top: 9px; width: 24px; height: 24px; }
.tray { display: flex; align-items: center; color: #fff; padding-bottom: 2px; }
.tray-group { display: flex; align-items: center; gap: 11px; margin: 0 24px 0 26px; }
.clock { width: 84px; text-align: right; font-size: 17.200px; line-height: 24px; letter-spacing: 0; white-space: nowrap; }
```
